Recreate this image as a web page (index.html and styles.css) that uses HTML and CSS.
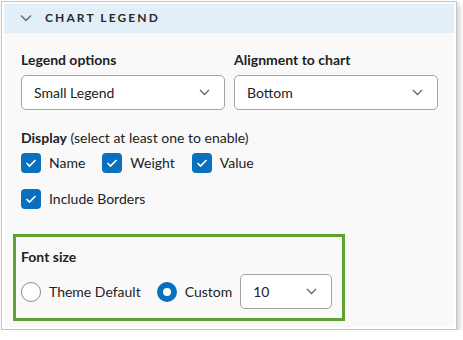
FILE: index.html
```html
<!doctype html>
<html lang="en">
<head>
  <meta charset="UTF-8" />
  <meta name="viewport" content="width=device-width, initial-scale=1.0" />
  <title>Chart Legend</title>
  <link rel="stylesheet" href="styles.css">
</head>
<body>
<div class="panel">
  <div class="panel-header">
    <svg class="caret" width="12" height="8" viewBox="0 0 12 8"><path d="M1 1.5 L6 6.5 L11 1.5" fill="none" stroke="#6b6b6b" stroke-width="1.5"/></svg>
    <span class="panel-title">Chart Legend</span>
  </div>
  <div class="panel-body">
    <div class="field-row">
      <div class="field">
        <label class="field-label">Legend options</label>
        <div class="select">
          <span>Small Legend</span>
          <svg width="11" height="7" viewBox="0 0 11 7"><path d="M1 1 L5.5 5.5 L10 1" fill="none" stroke="#666" stroke-width="1.3"/></svg>
        </div>
      </div>
      <div class="field">
        <label class="field-label">Alignment to chart</label>
        <div class="select">
          <span>Bottom</span>
          <svg width="11" height="7" viewBox="0 0 11 7"><path d="M1 1 L5.5 5.5 L10 1" fill="none" stroke="#666" stroke-width="1.3"/></svg>
        </div>
      </div>
    </div>

    <div class="display-label"><b>Display</b> (select at least one to enable)</div>
    <div class="check-row">
      <label class="check"><span class="box"><svg width="12" height="10" viewBox="0 0 12 10"><path d="M1.5 5 L4.5 8 L10.5 2" fill="none" stroke="#fff" stroke-width="1.6"/></svg></span>Name</label>
      <label class="check"><span class="box"><svg width="12" height="10" viewBox="0 0 12 10"><path d="M1.5 5 L4.5 8 L10.5 2" fill="none" stroke="#fff" stroke-width="1.6"/></svg></span>Weight</label>
      <label class="check"><span class="box"><svg width="12" height="10" viewBox="0 0 12 10"><path d="M1.5 5 L4.5 8 L10.5 2" fill="none" stroke="#fff" stroke-width="1.6"/></svg></span>Value</label>
    </div>
    <div class="check-row">
      <label class="check"><span class="box"><svg width="12" height="10" viewBox="0 0 12 10"><path d="M1.5 5 L4.5 8 L10.5 2" fill="none" stroke="#fff" stroke-width="1.6"/></svg></span>Include Borders</label>
    </div>

    <div class="font-size">
      <div class="field-label">Font size</div>
      <div class="radio-row">
        <label class="radio"><span class="dot"></span>Theme Default</label>
        <label class="radio"><span class="dot on"></span>Custom</label>
        <div class="select small">
          <span>10</span>
          <svg width="11" height="7" viewBox="0 0 11 7"><path d="M1 1 L5.5 5.5 L10 1" fill="none" stroke="#666" stroke-width="1.3"/></svg>
        </div>
      </div>
    </div>
  </div>
</div>
</body>
</html>
```

FILE: styles.css
```css
body {
  margin: 0;
  padding: 1px 0 0 1px;
  background: #fff;
  font-family: Lato, "Open Sans", sans-serif;
  font-size: 14px;
  color: #222;
}
.panel {
  width: 450px;
  padding: 2px;
  background: #fff;
  border: 1px solid #c4c4c4;
  box-shadow: 3px 3px 5px rgba(0, 0, 0, 0.18);
}
.panel-header {
  display: flex;
  align-items: center;
  height: 29px;
  padding: 0 0 2px 16px;
  box-sizing: border-box;
  background: #e3eff8;
}
.caret {
  margin-right: 13px;
}
.panel-title {
  font-size: 12px;
  font-weight: bold;
  letter-spacing: 2.1px;
  text-transform: uppercase;
  color: #2b2b2b;
}
.panel-body {
  background: #f9f9f9;
  padding: 17px 16px 6px 17px;
}
.field-row {
  display: flex;
  gap: 9px;
}
.field {
  flex: 1;
}
.field-label {
  display: block;
  font-weight: bold;
  line-height: 20px;
  margin-bottom: 5px;
}
.select {
  display: flex;
  align-items: center;
  justify-content: space-between;
  height: 33px;
  padding: 0 14px 0 12px;
  background: #fff;
  border: 1px solid #a3a3a3;
  border-radius: 5px;
}
.select.small {
  width: 64px;
}
.display-label {
  line-height: 20px;
  margin-top: 18px;
}
.check-row {
  display: flex;
  gap: 17px;
  margin-top: 5px;
}
.check-row + .check-row {
  margin-top: 16px;
}
.check,
.radio {
  display: flex;
  align-items: center;
  gap: 8px;
  line-height: 20px;
}
.box {
  display: flex;
  align-items: center;
  justify-content: center;
  width: 20px;
  height: 20px;
  border-radius: 4px;
  background: #0a6fbd;
}
.font-size {
  margin: 25px 0 0 -8px;
  width: 316px;
  padding: 10px 5px 9px;
  border: 3px solid #5fa22f;
}
.font-size .field-label {
  margin-bottom: 7px;
}
.radio-row {
  display: flex;
  align-items: center;
}
.radio {
  margin-right: 16px;
}
.radio + .radio {
  margin-right: 8px;
}
.dot {
  box-sizing: border-box;
  width: 20px;
  height: 20px;
  border-radius: 50%;
  border: 1px solid #8a8a8a;
  background: #fff;
}
.dot.on {
  border: 6px solid #0a6fbd;
}
```
